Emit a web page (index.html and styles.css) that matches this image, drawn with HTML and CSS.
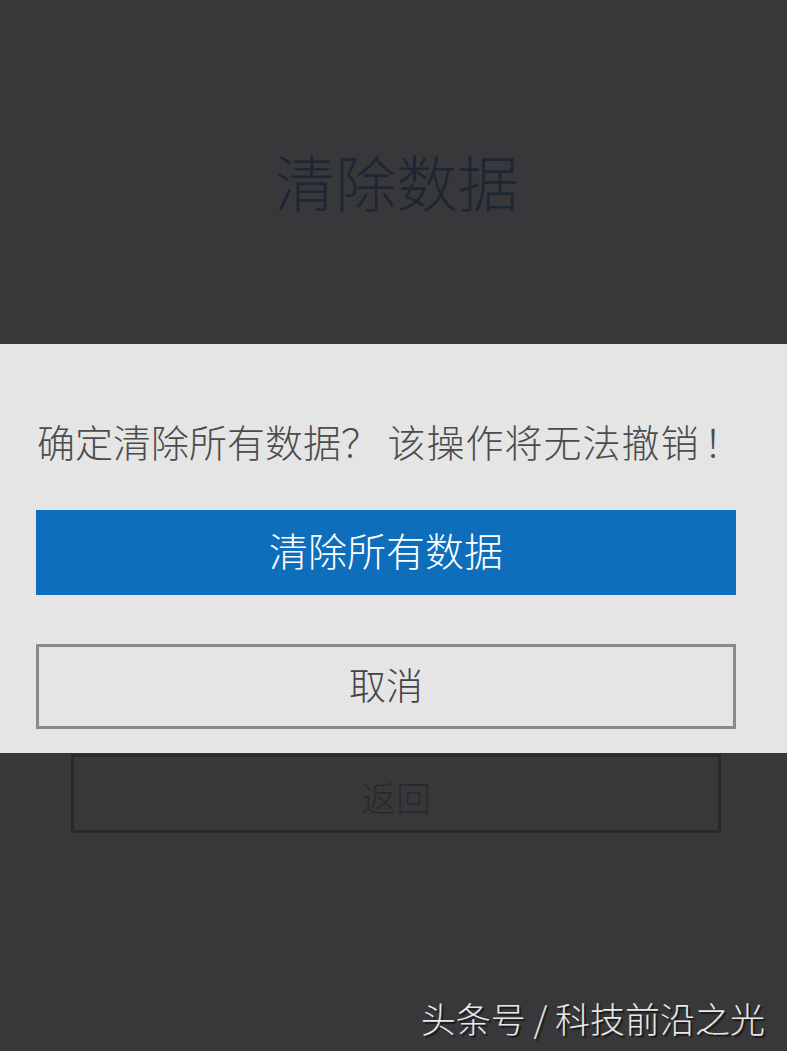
FILE: index.html
```html
<!DOCTYPE html>
<html lang="zh-CN">
<head>
<meta charset="utf-8">
<title>清除数据</title>
<link rel="stylesheet" href="styles.css">
</head>
<body>
<div class="page">
  <h1 class="title">清除数据</h1>
  <div class="back-wrap">
    <div class="btn-back">返回</div>
  </div>

  <div class="dialog">
    <p class="message">确定清除所有数据？ <span class="tail">该操作将无法撤销</span><span class="bang">！</span></p>
    <div class="btn-primary">清除所有数据</div>
    <div class="btn-cancel">取消</div>
  </div>

  <div class="watermark">头条号 / 科技前沿之光</div>
</div>
</body>
</html>
```

FILE: styles.css
```css
html, body {
  margin: 0;
  padding: 0;
}
body {
  background: #38383a;
  font-family: "Noto Sans CJK SC", "Noto Sans", sans-serif;
  font-weight: 300;
}
.page {
  position: relative;
  width: 787px;
  height: 1051px;
  overflow: hidden;
  background: #38383a;
}
.title {
  margin: 0;
  padding-top: 141px;
  height: 80px;
  line-height: 80px;
  font-size: 61px;
  font-weight: 300;
  color: #1d2634;
  text-align: center;
  padding-left: 6px;
}
.back-wrap {
  padding-top: 533px;
  padding-left: 71px;
}
.btn-back {
  box-sizing: border-box;
  width: 650px;
  height: 79px;
  border: 3px solid #2a2a2c;
  display: flex;
  align-items: center;
  justify-content: center;
  font-size: 35px;
  color: #29292b;
  padding-top: 5px;
}
.dialog {
  position: absolute;
  left: 0;
  right: 0;
  top: 344px;
  height: 409px;
  box-sizing: border-box;
  background: #e5e5e5;
  padding: 73px 51px 0 36px;
}
.message {
  margin: 0;
  height: 48px;
  line-height: 48px;
  font-size: 38px;
  color: #4c4c4c;
  white-space: nowrap;
  padding-left: 1px;
  margin-bottom: 45px;
}
.tail {
  letter-spacing: 1px;
}
.bang {
  margin-left: 4px;
}
.btn-primary {
  height: 85px;
  background: #0e6ebc;
  color: #ffffff;
  font-size: 39px;
  display: flex;
  align-items: center;
  justify-content: center;
  box-sizing: border-box;
  padding-bottom: 8px;
}
.btn-cancel {
  margin-top: 49px;
  box-sizing: border-box;
  height: 85px;
  border: 3px solid #8a8a8a;
  color: #444444;
  font-size: 37px;
  display: flex;
  align-items: center;
  justify-content: center;
  padding-bottom: 6px;
}
.watermark {
  position: absolute;
  right: 22px;
  bottom: 8px;
  font-size: 35px;
  line-height: 50px;
  color: #e8e8e8;
  text-shadow: 2px 2px 1px rgba(0, 0, 0, 0.55);
  white-space: nowrap;
}
```
